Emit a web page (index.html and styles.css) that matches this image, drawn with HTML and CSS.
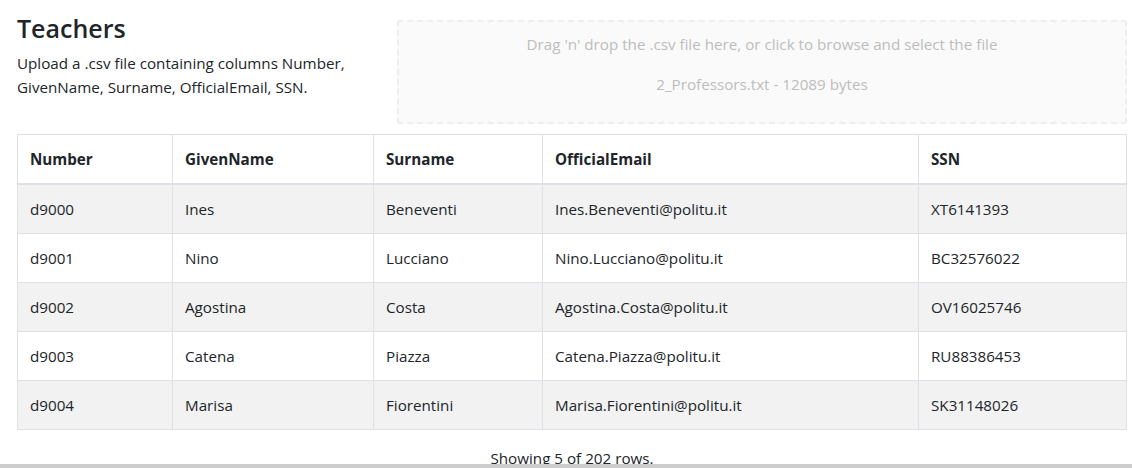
FILE: index.html
```html
<!DOCTYPE html>
<html lang="en">
<head>
<meta charset="utf-8">
<title>Teachers</title>
<link rel="stylesheet" href="styles.css">
</head>
<body>
<div class="page">
  <div class="top">
    <div class="intro">
      <h3 class="title">Teachers</h3>
      <p class="desc">Upload a .csv file containing columns Number, GivenName, Surname, OfficialEmail, SSN.</p>
    </div>
    <div class="dropzone">
      <p>Drag 'n' drop the .csv file here, or click to browse and select the file</p>
      <p>2_Professors.txt - 12089 bytes</p>
    </div>
  </div>
  <table class="grid">
    <colgroup>
      <col class="c1"><col class="c2"><col class="c3"><col class="c4"><col class="c5">
    </colgroup>
    <thead>
      <tr><th>Number</th><th>GivenName</th><th>Surname</th><th>OfficialEmail</th><th>SSN</th></tr>
    </thead>
    <tbody>
      <tr><td>d9000</td><td>Ines</td><td>Beneventi</td><td>Ines.Beneventi@politu.it</td><td>XT6141393</td></tr>
      <tr><td>d9001</td><td>Nino</td><td>Lucciano</td><td>Nino.Lucciano@politu.it</td><td>BC32576022</td></tr>
      <tr><td>d9002</td><td>Agostina</td><td>Costa</td><td>Agostina.Costa@politu.it</td><td>OV16025746</td></tr>
      <tr><td>d9003</td><td>Catena</td><td>Piazza</td><td>Catena.Piazza@politu.it</td><td>RU88386453</td></tr>
      <tr><td>d9004</td><td>Marisa</td><td>Fiorentini</td><td>Marisa.Fiorentini@politu.it</td><td>SK31148026</td></tr>
    </tbody>
  </table>
  <p class="footer">Showing 5 of 202 rows.</p>
</div>
<div class="hscroll"></div>
</body>
</html>
```
FILE: styles.css
```css
html, body {
  margin: 0;
  padding: 0;
  overflow: hidden;
}
body {
  font-family: "Open Sans", "Noto Sans", sans-serif;
  font-size: 15.2px;
  line-height: 24px;
  color: #212529;
  background: #fff;
}
.page {
  padding: 10px 5px 0 17px;
}
.top {
  display: flex;
  gap: 30px;
  margin-bottom: 10px;
}
.intro {
  width: 350px;
  flex: none;
}
.title {
  margin: 2px 0 7px;
  font-size: 25px;
  font-weight: 600;
  line-height: 32px;
}
.desc {
  margin: 0;
}
.dropzone {
  flex: 1;
  margin-top: 10px;
  display: flex;
  flex-direction: column;
  align-items: center;
  padding: 10px 20px 10px;
  border: 2px dashed #eeeeee;
  border-radius: 2px;
  background: #fafafa;
  color: #bdbdbd;
}
.dropzone p {
  margin: 0 0 16px;
}
.grid {
  width: 100%;
  table-layout: fixed;
  border-collapse: collapse;
  margin-bottom: 16px;
}
.grid th, .grid td {
  border: 1px solid #dee2e6;
  padding: 12px;
  text-align: left;
  vertical-align: top;
}
.grid th {
  font-weight: 700;
  border-bottom-width: 2px;
}
.grid tbody tr:nth-child(odd) {
  background: #f2f2f2;
}
.c1 { width: 155px; }
.c2 { width: 201px; }
.c3 { width: 169px; }
.c4 { width: 376px; }
.footer {
  margin: 0;
  text-align: center;
}
.hscroll {
  position: fixed;
  left: 0;
  right: 0;
  bottom: 0;
  height: 4px;
  background: #cdcdcd;
}
```
